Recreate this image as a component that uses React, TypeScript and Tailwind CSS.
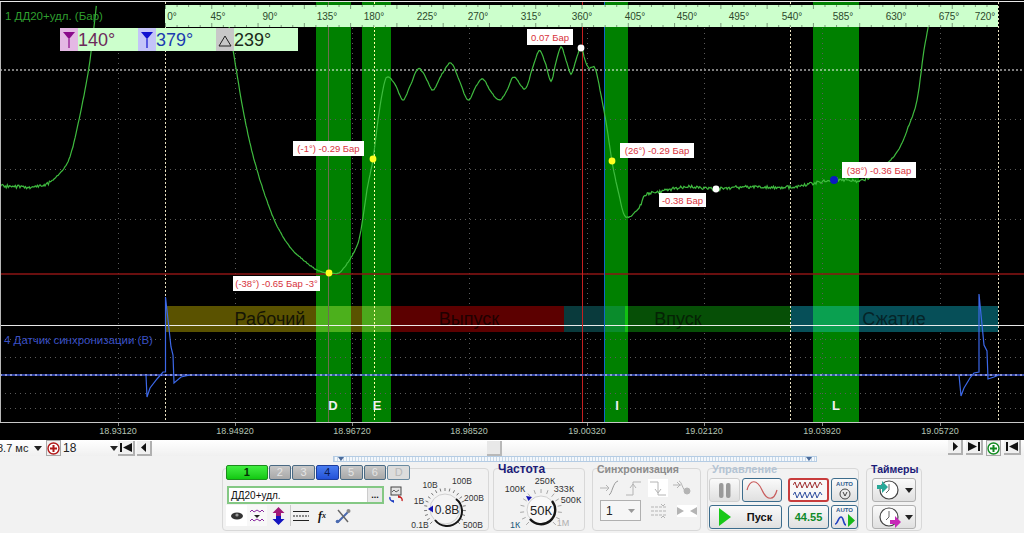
import type { ReactNode } from 'react';

const curveKnots: [number, number][] = [
  [0, 186], [30, 187], [45, 185], [55, 178], [65, 167], [72, 150], [80, 115], [85, 90], [90, 60], [97, 0],
];
const curveKnots2: [number, number][] = [
  [228, 20], [233, 50], [245, 120], [257, 170], [273, 217], [287, 243], [300, 257], [317, 270], [329, 273],
  [340, 272], [353, 254], [360, 235], [367, 190], [373, 159], [378, 120], [382, 95], [386, 78], [391, 79],
  [396, 86], [403, 100], [410, 86], [418, 69], [425, 76], [433, 90], [442, 74], [451, 63], [459, 80], [468, 100],
  [476, 86], [483, 79], [491, 92], [500, 100], [507, 90], [514, 77], [525, 89], [532, 70], [539, 51], [545, 62],
  [551, 81], [556, 62], [561, 47], [566, 60], [571, 74], [576, 60], [581, 47], [585, 60], [589, 68], [595, 68],
  [600, 90], [606, 122], [612, 161], [619, 195], [626, 217], [639, 208], [645, 195], [659, 192], [685, 187],
  [715, 189], [745, 187], [790, 187], [834, 180], [865, 179], [895, 155], [909, 125], [917, 100], [924, 50],
  [928, 28], [931, 5],
];

// catmull-rom, sampled, with a bit of sensor noise on top
function sample(knots: [number, number][]) {
  const out: string[] = [];
  for (let i = 0; i < knots.length - 1; i++) {
    const p0 = knots[Math.max(i - 1, 0)];
    const p1 = knots[i];
    const p2 = knots[i + 1];
    const p3 = knots[Math.min(i + 2, knots.length - 1)];
    const steps = Math.max(2, Math.round(Math.abs(p2[0] - p1[0])));
    for (let s = 0; s < steps; s++) {
      const t = s / steps;
      const x = 0.5 * (2 * p1[0] + (p2[0] - p0[0]) * t + (2 * p0[0] - 5 * p1[0] + 4 * p2[0] - p3[0]) * t * t + (3 * p1[0] - p0[0] - 3 * p2[0] + p3[0]) * t * t * t);
      const y = 0.5 * (2 * p1[1] + (p2[1] - p0[1]) * t + (2 * p0[1] - 5 * p1[1] + 4 * p2[1] - p3[1]) * t * t + (3 * p1[1] - p0[1] - 3 * p2[1] + p3[1]) * t * t * t);
      const r = Math.sin(x * 12.9898) * 43758.5453;
      const flat = x < 50 || (x > 640 && x < 870);
      const n = (r - Math.floor(r) - 0.5) * (flat ? 3.4 : 0.9);
      out.push(`${x.toFixed(1)},${(y + n).toFixed(1)}`);
    }
  }
  return out.join(' ');
}

const greenA = sample(curveKnots);
const greenB = sample(curveKnots2);

const syncPulse1 = '146,375 147,397 150,388 157,379 163,372 165.5,372 165.5,297 171,347 173,355 174,383 181,377 190,375';
const syncPulse2 = '959,375 961,396 964,388 970,378 974,373 979,372 979,294 984,345 987,351 988,379 994,377 999,375';

const rulerLabels = [
  ['0°', 172], ['45°', 218], ['90°', 270], ['135°', 327], ['180°', 374], ['225°', 427], ['270°', 478], ['315°', 531],
  ['360°', 582], ['405°', 635], ['450°', 687], ['495°', 739], ['540°', 792], ['585°', 843], ['630°', 896], ['675°', 949], ['720°', 985],
] as const;

const hints = [
  { text: '0.07 Бар', x: 527, y: 29, w: 46, h: 16 },
  { text: '(-1°) -0.29 Бар', x: 293, y: 141, w: 71, h: 15 },
  { text: '(-38°) -0.65 Бар -3°', x: 233, y: 276, w: 87, h: 15 },
  { text: '(26°) -0.29 Бар', x: 620, y: 143, w: 74, h: 15 },
  { text: '-0.38 Бар', x: 659, y: 193, w: 47, h: 14 },
  { text: '(38°) -0.36 Бар', x: 842, y: 162, w: 74, h: 16 },
];

const dots = [
  { x: 329, y: 273, c: '#ffff20', r: 3.4 },
  { x: 373, y: 159, c: '#ffff20', r: 3.4 },
  { x: 612, y: 161, c: '#ffff20', r: 3.4 },
  { x: 581, y: 48, c: '#ffffff', r: 3.4 },
  { x: 716, y: 189, c: '#ffffff', r: 3.4 },
  { x: 834, y: 180, c: '#0a1ac0', r: 4 },
];

const axisLabels: [string, number][] = [
  ['18.93120', 118], ['18.94920', 235], ['18.96720', 352], ['18.98520', 469],
  ['19.00320', 587], ['19.02120', 704], ['19.03920', 822], ['19.05720', 940],
];

function Chart() {
  const ticks = [];
  for (let x = 165.5; x < 998; x += 11.57) ticks.push(x);

  return (
    <svg width={1024} height={440} className="absolute left-0 top-0 block" fontFamily="Liberation Sans, sans-serif">
      <rect width={1024} height={440} fill="#000" />
      <rect x={0} y={1} width={1024} height={1} fill="#e8e8e8" />

      {/* green windows */}
      <rect x={316} y={2} width={35} height={420} fill="#008000" />
      <rect x={362} y={2} width={29} height={420} fill="#008000" />
      <rect x={605} y={2} width={23} height={420} fill="#008000" />
      <rect x={813} y={2} width={46} height={420} fill="#008000" />

      {/* dim grid */}
      {[118, 235, 352, 469, 587, 704, 822, 940].map((x) => (
        <line key={x} x1={x + 0.5} x2={x + 0.5} y1={28} y2={422} stroke="#5a5a5a" strokeDasharray="1 4" />
      ))}
      {[119, 169, 219, 339, 357, 393, 408].map((y) => (
        <line key={y} x1={0} x2={1024} y1={y + 0.5} y2={y + 0.5} stroke="#5a5a5a" strokeDasharray="1 4" />
      ))}

      {/* stroke phases */}
      <rect x={165} y={306} width={226} height={26} fill="#5a5200" />
      <rect x={391} y={306} width={173} height={26} fill="#5c0000" />
      <rect x={564} y={306} width={61} height={26} fill="#093a3c" />
      <rect x={625} y={306} width={166} height={26} fill="#064f06" />
      <rect x={791} y={306} width={207} height={26} fill="#064f58" />
      <rect x={316} y={306} width={35} height={26} fill="#4cb01c" />
      <rect x={362} y={306} width={29} height={26} fill="#4ca81c" />
      <rect x={605} y={306} width={20} height={26} fill="#0a8c2c" />
      <rect x={625} y={306} width={3} height={26} fill="#12c012" />
      <rect x={813} y={306} width={46} height={26} fill="#0aa050" />
      <text x={270} y={325} textAnchor="middle" fontSize={18} fill="#151505">Рабочий</text>
      <text x={469} y={325} textAnchor="middle" fontSize={18} fill="#200000">Выпуск</text>
      <text x={678} y={325} textAnchor="middle" fontSize={18} fill="#052205">Впуск</text>
      <text x={894} y={325} textAnchor="middle" fontSize={18} fill="#052428">Сжатие</text>
      <rect x={0} y={325} width={1024} height={1} fill="#f4f4f4" opacity={0.95} />

      {/* bright grid */}
      <line x1={0} x2={1024} y1={70} y2={70} stroke="#ffffff" strokeDasharray="2 2" />
      {[165.5, 374.5, 790.5, 998.5].map((x) => (
        <line key={x} x1={x} x2={x} y1={2} y2={422} stroke={x === 374.5 ? '#ffffa0' : '#e8e0c0'} strokeDasharray="2 2" />
      ))}

      {/* cursors */}
      <line x1={0} x2={1024} y1={274} y2={274} stroke="#8c1414" strokeWidth={1.5} />
      <line x1={582.5} x2={582.5} y1={2} y2={422} stroke="#c42020" />
      <line x1={328.5} x2={328.5} y1={2} y2={422} stroke="#6e6e50" />
      <line x1={604.5} x2={604.5} y1={2} y2={422} stroke="#1068c8" />

      {/* signals */}
      <line x1={0} x2={1024} y1={375} y2={375} stroke="#4058d8" strokeWidth={1.5} />
      <line x1={0} x2={1024} y1={375} y2={375} stroke="#e8e8ff" strokeDasharray="2 3" />
      <polyline points={syncPulse1} fill="none" stroke="#3c68e8" strokeWidth={1.2} />
      <polyline points={syncPulse2} fill="none" stroke="#3c68e8" strokeWidth={1.2} />
      <polyline points={greenA} fill="none" stroke="#3fbb3f" strokeWidth={1.2} />
      <polyline points={greenB} fill="none" stroke="#3fbb3f" strokeWidth={1.2} />

      {/* degree ruler */}
      <rect x={165} y={5} width={833} height={22} fill="#ccffcc" />
      {ticks.map((x, i) => (
        <g key={i} stroke="#7a9a7a">
          <line x1={x} x2={x} y1={5} y2={i % 4 === 0 ? 9 : 7} />
          <line x1={x} x2={x} y1={27} y2={i % 4 === 0 ? 23 : 25} />
        </g>
      ))}
      {rulerLabels.map(([t, x]) => (
        <text key={t} x={x} y={20} textAnchor="middle" fontSize={10} fill="#2c4a2c">{t}</text>
      ))}

      <text x={5} y={20} fontSize={11.5} fill="#2f9f2f">1 ДД20+удл. (Бар)</text>
      <text x={4} y={344} fontSize={11.5} fill="#3a50c4">4 Датчик синхронизации (В)</text>

      {hints.map((h) => (
        <g key={h.text}>
          <rect x={h.x} y={h.y} width={h.w} height={h.h} fill="#fff" />
          <text x={h.x + h.w / 2} y={h.y + h.h / 2 + 3.5} textAnchor="middle" fontSize={9.5} fill="#d8323c">{h.text}</text>
        </g>
      ))}
      {dots.map((d) => (
        <circle key={`${d.x}`} cx={d.x} cy={d.y} r={d.r} fill={d.c} />
      ))}

      {[['D', 333], ['E', 377], ['I', 617], ['L', 836]].map(([t, x]) => (
        <text key={t} x={x} y={410} textAnchor="middle" fontSize={13} fontWeight="bold" fill="#f0f0f0">{t}</text>
      ))}

      <rect x={0} y={422} width={1024} height={1} fill="#c8c8c8" />
      <rect x={0} y={2} width={1} height={420} fill="#b8b8b8" />
      {axisLabels.map(([t, x]) => (
        <g key={t}>
          <line x1={x + 0.5} x2={x + 0.5} y1={423} y2={426} stroke="#888" />
          <text x={x} y={434} textAnchor="middle" fontSize={9} fill="#b4c4b4">{t}</text>
        </g>
      ))}
    </svg>
  );
}

function Funnel({ color }: { color: string }) {
  return (
    <svg width={18} height={22} viewBox="0 0 18 22">
      <path d="M3 4h12l-5 6h-2z" fill={color} />
      <path d="M9 9v11" stroke={color} strokeWidth={1.2} />
    </svg>
  );
}

function Readout() {
  return (
    <div className="absolute left-[60px] top-[28px] flex h-[23px] w-[238px] items-center bg-[#ccffcc] text-[18px] leading-none">
      <div className="flex h-full w-[78px] items-center">
        <div className="h-full w-[18px] bg-[#e4b8e4]"><Funnel color="#8a0a8a" /></div>
        <span className="text-[#6c2a5a]">140°</span>
      </div>
      <div className="flex h-full w-[78px] items-center">
        <div className="h-full w-[18px] bg-[#c4c4f8]"><Funnel color="#1010d0" /></div>
        <span className="text-[#1c3cb0]">379°</span>
      </div>
      <div className="flex h-full items-center">
        <div className="h-full w-[18px] bg-[#c8c8c8]">
          <svg width={18} height={22} viewBox="0 0 18 22">
            <path d="M3 18 9 8l6 10z" fill="none" stroke="#222" />
          </svg>
        </div>
        <span className="text-[#1a2a1a]">239°</span>
      </div>
    </div>
  );
}

function NavButton({ children, wide }: { children: ReactNode; wide?: boolean }) {
  return (
    <div className={`flex h-[15px] items-center justify-center border-r-2 border-b-2 border-[#b0b0b0] bg-[#f0f0f0] ${wide ? 'w-[17px]' : 'w-[15px]'}`}>
      {children}
    </div>
  );
}

const Caret = ({ dir }: { dir: 'l' | 'r' }) => (
  <svg width={6} height={9} viewBox="0 0 6 9"><path d={dir === 'l' ? 'M5 0v9L0 4.5z' : 'M1 0v9l5-4.5z'} fill="#111" /></svg>
);
const First = () => (
  <svg width={12} height={9} viewBox="0 0 12 9"><path d="M0 0h2v9H0zM12 0v9L3 4.5z" fill="#111" /></svg>
);
const Last = () => (
  <svg width={12} height={9} viewBox="0 0 12 9"><path d="M10 0h2v9h-2zM0 0v9l9-4.5z" fill="#111" /></svg>
);
const DownTri = () => (
  <svg width={8} height={5} viewBox="0 0 8 5"><path d="M0 0h8L4 5z" fill="#222" /></svg>
);

function ZoomIcon({ color }: { color: string }) {
  return (
    <div className="flex h-[16px] w-[15px] items-center justify-center border border-[#a8a8a8] bg-[#f0f0f0]">
      <svg width={13} height={13} viewBox="0 0 13 13">
        <circle cx={6.5} cy={6.5} r={5.5} fill="#fff" stroke={color} strokeWidth={1.4} />
        <path d="M6.5 3v7M3 6.5h7" stroke={color} strokeWidth={2} />
      </svg>
    </div>
  );
}

function ScrollRow() {
  return (
    <div className="flex h-[16px] items-center bg-gradient-to-b from-white to-[#f0f0f0] text-[11px] text-[#222]">
      <div className="flex w-[46px] shrink-0 items-center overflow-hidden">
        <span className="-ml-[3px] w-[37px] shrink-0 whitespace-nowrap">8.7 мс</span>
        <DownTri />
      </div>
      <ZoomIcon color="#b01818" />
      <div className="flex w-[57px] shrink-0 items-center pl-[2px] text-[12px]">
        <span className="w-[47px]">18</span>
        <DownTri />
      </div>
      <div className="flex w-[37px] shrink-0 gap-[2px]">
        <NavButton wide><First /></NavButton>
        <NavButton><Caret dir="l" /></NavButton>
      </div>
      <div className="ml-[332px] h-[15px] w-[15px] shrink-0 border-r-2 border-b-2 border-[#b8b8b8] bg-[#e8e8e8]" />
      <div className="ml-auto flex gap-[3px] pr-[3px]">
        <NavButton><Caret dir="r" /></NavButton>
        <NavButton wide><Last /></NavButton>
        <ZoomIcon color="#108a20" />
        <NavButton wide><First /></NavButton>
      </div>
    </div>
  );
}

function Splitter() {
  return (
    <div className="ml-[333px] flex h-[6px] w-[484px] items-center justify-between border border-[#b4cce4] bg-[repeating-linear-gradient(90deg,#c8d8e8_0,#c8d8e8_1px,#f4f8fc_1px,#f4f8fc_3px)] px-[4px]">
      <svg width={6} height={4} viewBox="0 0 6 4"><path d="M0 0h6L3 4z" fill="#4a6a9a" /></svg>
      <svg width={6} height={4} viewBox="0 0 6 4"><path d="M0 0h6L3 4z" fill="#4a6a9a" /></svg>
    </div>
  );
}

function Group({ title, titleClass, className, children }: { title?: string; titleClass?: string; className: string; children: ReactNode }) {
  return (
    <div className={`relative h-[63px] shrink-0 rounded-[4px] border border-[#d8d8d8] bg-[#f2f2f2] ${className}`}>
      {title && (
        <span className={`absolute -top-[6px] left-[4px] leading-[13px] font-bold ${titleClass}`}>{title}</span>
      )}
      {children}
    </div>
  );
}

const tabs = ['2', '3', '4', '5', '6', 'D'];

function VoltageKnob() {
  const cx = 35;
  const cy = 40;
  const marks = Array.from({ length: 21 }, (_, i) => -225 + i * 13.5);
  return (
    <svg width={78} height={61} className="block shrink-0" fontFamily="Liberation Sans, sans-serif">
      {marks.map((a) => {
        const r = (a * Math.PI) / 180;
        return (
          <line key={a} x1={cx + 18 * Math.cos(r)} y1={cy + 18 * Math.sin(r)} x2={cx + 21 * Math.cos(r)} y2={cy + 21 * Math.sin(r)} stroke="#7a7a7a" />
        );
      })}
      <circle cx={cx} cy={cy} r={15} fill="#f4f4f4" stroke="#d0d0d0" strokeWidth={1} />
      <path d={`M${cx - 10} ${cy + 11} A15 15 0 1 0 ${cx + 11} ${cy - 10}`} fill="none" stroke="#151515" strokeWidth={2} />
      <path d={`M${cx - 17} ${cy}l5-3.5v7z`} fill="#1414b4" />
      <text x={cx + 2} y={cy + 4.5} textAnchor="middle" fontSize={12} fill="#222">0.8В</text>
      <g fontSize={8.5} fill="#333" textAnchor="middle">
        <text x={20} y={19}>10В</text>
        <text x={52} y={15}>100В</text>
        <text x={64} y={32}>200В</text>
        <text x={9} y={35}>1В</text>
        <text x={10} y={59}>0.1В</text>
        <text x={63} y={59}>500В</text>
      </g>
    </svg>
  );
}

function FreqKnob() {
  const cx = 47;
  const cy = 41;
  const marks = Array.from({ length: 15 }, (_, i) => -225 + i * 19.3);
  return (
    <svg width={90} height={61} className="block" fontFamily="Liberation Sans, sans-serif">
      {marks.map((a) => {
        const r = (a * Math.PI) / 180;
        return (
          <line key={a} x1={cx + 17 * Math.cos(r)} y1={cy + 17 * Math.sin(r)} x2={cx + 21 * Math.cos(r)} y2={cy + 21 * Math.sin(r)} stroke="#a8a8a8" />
        );
      })}
      <circle cx={cx} cy={cy} r={14} fill="#f8f8f8" stroke="#d0d0d0" />
      <path d={`M${cx - 11} ${cy + 9} A14 14 0 0 0 ${cx + 11} ${cy - 9}`} fill="none" stroke="#151515" strokeWidth={2.4} />
      <path d={`M${cx - 15} ${cy - 14}l6 1-3.5 4z`} fill="#1414b4" />
      <text x={cx} y={cy + 4.5} textAnchor="middle" fontSize={13} fill="#222">50К</text>
      <g fontSize={9} fill="#333" textAnchor="middle">
        <text x={51} y={15}>250К</text>
        <text x={21} y={23}>100К</text>
        <text x={70} y={23}>333К</text>
        <text x={77} y={34}>500К</text>
        <text x={21} y={59} fill="#1c5a7a">1К</text>
        <text x={69} y={57} fill="#b0b0b0">1М</text>
      </g>
    </svg>
  );
}

function ChannelGroup() {
  return (
    <Group className="flex w-[267px]">
      <div className="w-[187px] shrink-0 pl-[3px]">
        <div className="-mt-[4px] flex gap-[1px]">
          <div className="flex h-[15px] w-[42px] items-center justify-center rounded-[2px] border border-[#1c8c1c] bg-gradient-to-b from-[#40ee40] to-[#10c810] text-[11px] font-bold text-[#053005]">1</div>
          {tabs.map((t) => (
            <div
              key={t}
              className={`flex h-[15px] w-[23px] items-center justify-center rounded-[2px] border text-[11px] ${
                t === '4'
                  ? 'border-[#1c3c9c] bg-gradient-to-b from-[#4a7cf0] to-[#2452d8] text-[#0a1a50]'
                  : t === 'D'
                    ? 'border-[#6a8aa0] bg-[#dcdcdc] text-[#b8b8b8]'
                    : 'border-[#4a6a84] bg-gradient-to-b from-[#c8c8c8] to-[#a8a8a8] text-[#e4e4e4]'
              }`}
            >
              {t}
            </div>
          ))}
        </div>
        <div className="mt-[6px] flex items-center pl-[1px]">
          <div className="flex h-[18px] w-[157px] items-center border-2 border-[#84c884] bg-white pl-[2px] text-[10px] text-[#111]">
            <span className="flex-1">ДД20+удл.</span>
            <span className="flex h-full w-[15px] items-center justify-center border-l border-[#ccc] bg-[#e8e8e8] text-[9px] leading-none font-bold">...</span>
          </div>
          <svg width={18} height={18} viewBox="0 0 18 18" className="ml-[3px]">
            <rect x={4} y={1} width={10} height={8} fill="#e4e4e4" stroke="#444" />
            <path d="M5 6l2-2 2 2 3-2" stroke="#444" fill="none" strokeWidth={0.8} />
            <path d="M3 11a3 3 0 0 0 3 4" stroke="#1c3cc0" fill="none" strokeWidth={1.4} />
            <path d="M4 15l3 2v-3z" fill="#1c3cc0" />
            <path d="M15 15a3 3 0 0 0-3-4" stroke="#c82020" fill="none" strokeWidth={1.4} />
            <path d="M14 11l-3-2v3z" fill="#c82020" />
          </svg>
        </div>
        <div className="mt-[1px] flex items-center">
          <div className="flex h-[21px] w-[21px] items-center justify-center bg-white">
            <svg width={14} height={10} viewBox="0 0 14 10"><ellipse cx={7} cy={5} rx={6} ry={3.5} fill="#333" /><circle cx={7} cy={4} r={1.6} fill="#999" /></svg>
          </div>
          <div className="flex h-[21px] w-[20px] items-center justify-center bg-[#f8f8f8]">
            <svg width={16} height={16} viewBox="0 0 16 16" fill="none" strokeWidth={1}>
              <path d="M1 4l2-2 2 2 3-2 3 2 2-2 2 2" stroke="#8a2aa0" />
              <path d="M5 7h6L8 10z" fill="#222" />
              <path d="M1 13l2-2 2 2 3-2 3 2 2-2 2 2" stroke="#8a2aa0" />
            </svg>
          </div>
          <div className="flex h-[21px] w-[22px] items-center justify-center">
            <svg width={13} height={18} viewBox="0 0 13 18"><path d="M6.5 0l6 6H9v3H4V6H.5z" fill="#a01878" /><path d="M6.5 18l6-6H9V9H4v3H.5z" fill="#1414c0" /></svg>
          </div>
          <div className="ml-[1px] flex h-[21px] w-[21px] items-center justify-center border-l border-[#ccc]">
            <svg width={16} height={12} viewBox="0 0 16 12" stroke="#222"><path d="M0 1.5h16" /><path d="M0 6h16" strokeDasharray="2 1" /><path d="M0 10.5h16" /></svg>
          </div>
          <div className="flex h-[21px] w-[22px] items-center justify-center font-['Liberation_Serif',serif] text-[12px] font-bold text-[#111] italic">
            f<span className="text-[8px]">x</span>
          </div>
          <div className="flex h-[21px] w-[20px] items-center justify-center">
            <svg width={16} height={16} viewBox="0 0 16 16">
              <path d="M3 14 13 4" stroke="#4a6ab0" strokeWidth={2} />
              <path d="M3 2l10 12" stroke="#666" strokeWidth={1.4} />
              <circle cx={13.5} cy={3} r={2} fill="#8a8a8a" />
              <circle cx={2.5} cy={13.5} r={1.8} fill="#4a6ab0" />
            </svg>
          </div>
        </div>
      </div>
      <VoltageKnob />
    </Group>
  );
}

function SyncGroup() {
  const g = '#b4b4b4';
  return (
    <Group title="Синхронизация" titleClass="text-[10.5px] text-[#8c8c8c]" className="w-[109px]">
      <div className="mt-[10px] flex justify-between pr-[8px] pl-[6px]">
        <svg width={20} height={18} viewBox="0 0 20 18" fill="none" stroke={g}><path d="M1 9h9M7 6l3 3-3 3" /><path d="M10 16c3-1 4-13 9-14" stroke="#999" /></svg>
        <svg width={20} height={18} viewBox="0 0 20 18" fill="none" stroke={g}><path d="M3 16h7V3h8M7 9l3-4 3 4" /></svg>
        <svg width={20} height={18} viewBox="0 0 20 18" fill="none" stroke={g} className="bg-white"><path d="M2 3h8v13h8M7 10l3 4 3-4" /></svg>
        <svg width={20} height={18} viewBox="0 0 20 18" fill="none" stroke={g}><path d="M1 6h8M5 3l3 3-3 3" /><path d="M7 2c3 1 3 8 8 12" /><circle cx={15} cy={12} r={3} fill={g} /></svg>
      </div>
      <div className="mt-[3px] flex items-center pl-[7px]">
        <div className="flex h-[21px] w-[41px] items-center justify-between border border-[#b0b0b0] bg-[#f6f6f6] px-[5px] text-[12px] text-[#222]">
          <span>1</span>
          <svg width={7} height={4} viewBox="0 0 7 4"><path d="M0 0h7L3.5 4z" fill="#999" /></svg>
        </div>
        <svg width={18} height={16} viewBox="0 0 18 16" className="ml-[9px]" fill="none" stroke={g}><path d="M1 4h16M1 8h16M1 12h16" strokeDasharray="3 1" /><path d="M11 1l2 2 2-2M11 15l2-2 2 2" /></svg>
        <svg width={20} height={12} viewBox="0 0 20 12" className="ml-[9px] bg-white" fill={g}><path d="M0 2l7 4-7 4zM20 2l-7 4 7 4z" /></svg>
      </div>
    </Group>
  );
}

function CtrlButton({ className, children }: { className: string; children: ReactNode }) {
  return (
    <div className={`flex shrink-0 items-center justify-center rounded-[3px] border bg-gradient-to-b from-[#fafafa] to-[#e0e0e0] ${className}`}>
      {children}
    </div>
  );
}

const ZigZag = ({ color }: { color: string }) => (
  <svg width={32} height={8} viewBox="0 0 32 8" fill="none" stroke={color}>
    <path d="M0 4l2-3 2 6 3-6 2 6 3-6 2 6 3-6 2 6 3-6 2 6 3-6 2 3" />
  </svg>
);

function ControlGroup() {
  return (
    <Group title="Управление" titleClass="text-[11px] text-[#b4c4d4]" className="w-[152px]">
      <div className="flex flex-col gap-[3px] pt-[9px] pl-[1px]">
        <div className="flex gap-[2px]">
          <CtrlButton className="h-[24px] w-[31px] border-[#d0d0d0]">
            <svg width={12} height={15} viewBox="0 0 12 15"><rect x={0} y={0} width={4.5} height={15} rx={2} fill="#9a9a9a" /><rect x={7} y={0} width={4.5} height={15} rx={2} fill="#9a9a9a" /></svg>
          </CtrlButton>
          <CtrlButton className="h-[24px] w-[40px] border-[#3c6c8c]">
            <svg width={32} height={18} viewBox="0 0 32 18" fill="none" stroke="#c85a5a" strokeWidth={1.2}><path d="M1 9C4-2 11-2 16 9s12 11 15 0" /></svg>
          </CtrlButton>
          <div className="flex w-[3px]" />
          <div className="flex h-[24px] w-[41px] shrink-0 flex-col items-center justify-center gap-[2px] rounded-[3px] border-2 border-[#c83c3c] bg-[#f8f8f8]">
            <ZigZag color="#a03030" />
            <ZigZag color="#3050a0" />
          </div>
          <CtrlButton className="h-[24px] w-[27px] flex-col border-[#3c6c8c]">
            <span className="text-[6px] leading-[7px] font-bold text-[#2c5a8c]">AUTO</span>
            <svg width={14} height={12} viewBox="0 0 14 12" fill="none" stroke="#444"><circle cx={7} cy={6} r={5} /><path d="M5 4l2 4 2-4" /></svg>
          </CtrlButton>
        </div>
        <div className="flex gap-[2px]">
          <CtrlButton className="relative h-[24px] w-[73px] border-[#3c6c8c]">
            <svg width={12} height={18} viewBox="0 0 12 18" className="absolute left-[9px] top-[2px]"><path d="M0 0l12 9-12 9z" fill="#18c818" /></svg>
            <span className="pl-[28px] text-[11px] font-bold text-[#111]">Пуск</span>
          </CtrlButton>
          <div className="flex w-[3px]" />
          <CtrlButton className="h-[24px] w-[41px] border-[#3c6c8c]">
            <span className="text-[11px] font-bold text-[#108a28]">44.55</span>
          </CtrlButton>
          <CtrlButton className="h-[24px] w-[27px] flex-col border-[#3c6c8c]">
            <span className="text-[6px] leading-[7px] font-bold text-[#2c5a8c]">AUTO</span>
            <svg width={22} height={13} viewBox="0 0 22 13" fill="none"><path d="M1 10c3 0 3-7 6-7s2 8 5 8" stroke="#2040c0" strokeWidth={1.6} /><path d="M14 0l7 6.5-7 6.5z" fill="#18b818" /></svg>
          </CtrlButton>
        </div>
      </div>
    </Group>
  );
}

function TimerButton({ arrow, side }: { arrow: string; side: 'l' | 'r' }) {
  return (
    <CtrlButton className="h-[24px] w-[44px] gap-[3px] border-[#b0b0b0]">
      <svg width={26} height={22} viewBox="0 0 26 22" fill="none">
        <circle cx={13} cy={11} r={9} fill="#fff" stroke="#444" strokeWidth={1.2} />
        <path d="M13 5v6l-3 3" stroke="#666" />
        <path d={side === 'l' ? 'M1 6h5V2l6 6-6 6v-4H1z' : 'M14 14h5v-4l6 6-6 6v-4h-5z'} fill={arrow} />
      </svg>
      <DownTri />
    </CtrlButton>
  );
}

function TimersGroup() {
  return (
    <Group title="Таймеры" titleClass="text-[10.5px] text-[#1c1c78]" className="w-[56px]">
      <div className="flex flex-col items-center gap-[3px] pt-[9px]">
        <TimerButton arrow="#28a898" side="l" />
        <TimerButton arrow="#c828b8" side="r" />
      </div>
    </Group>
  );
}

export default function App() {
  return (
    <div className="flex h-[533px] w-[1024px] flex-col overflow-hidden bg-[#f2f2f2] font-['Liberation_Sans',sans-serif]">
      <div className="relative h-[440px] shrink-0 bg-black">
        <Chart />
        <Readout />
      </div>
      <ScrollRow />
      <Splitter />
      <div className="mt-[6px] flex pl-[222px]">
        <ChannelGroup />
        <Group title="Частота" titleClass="text-[#1c1c78] text-[12px]" className="ml-[4px] w-[92px]">
          <FreqKnob />
        </Group>
        <div className="ml-[7px]"><SyncGroup /></div>
        <div className="ml-[6px]"><ControlGroup /></div>
        <div className="ml-[7px]"><TimersGroup /></div>
      </div>
    </div>
  );
}
